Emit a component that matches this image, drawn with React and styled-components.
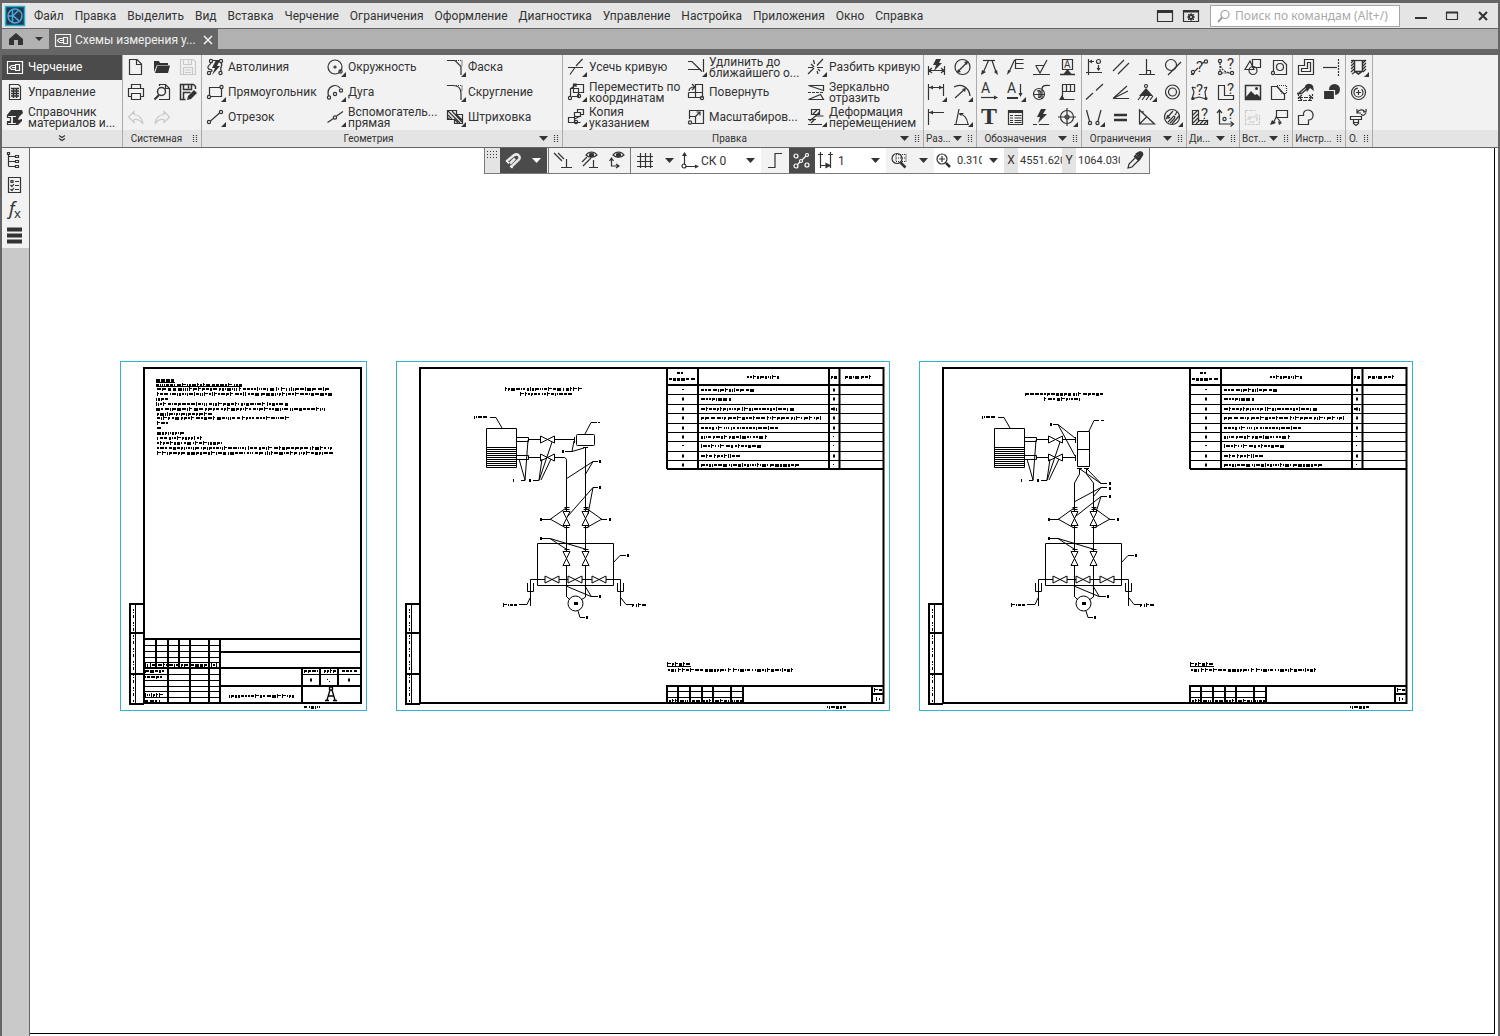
import styled, { createGlobalStyle, css } from 'styled-components';

const INK = '#333333';

const Svg = ({ children, w = 20, h = 21, sw = 1.2, ...rest }) => (
  <svg width={w} height={h} viewBox={`0 0 ${w} ${h}`} fill="none" stroke="currentColor" strokeWidth={sw} aria-hidden="true" {...rest}>
    {children}
  </svg>
);

// small helpers shared by the icons
const P = ({ d, ...rest }) => <path d={d} {...rest} />;
const F = ({ d }) => <path d={d} fill="currentColor" stroke="none" />;
const Dot = ({ x, y, r = 1.6 }) => <circle cx={x} cy={y} r={r} />;
const Glyph = ({ x, y, size, children }) => (
  <text x={x} y={y} fontSize={size} fill="currentColor" stroke="none">{children}</text>
);
const More = () => <F d="M20 15v5h-5z" />;

const icons = {
  drafting: <><P d="M2.500 4.500h15v12h-15z" /><P d="M10.500 7.500h4v6h-4zM10.500 8.500h-4l-2 2l2 2h4M7 10.500h3" /></>,
  control: <><P d="M4.500 2.500h9l2 2v13h-11z" /><P d="M6 6.500h8M6 9h8M6 11.500h8M6 14h8M8.500 6v10M11.500 6v10" strokeWidth="1.500" /></>,
  materials: <><F d="M2 8l4-5h11l1 3-4 4-1 3 4-1v2l-4 4H2v-4h3v-4H2z" /><path d="M2.500 8.500h9v2h-3v5h3v2h-9v-2h3v-5h-3z" fill="#f2f2f2" /></>,
  newDoc: <P d="M3.500 2.500h7.500l4.500 4.500v10.500h-12zM10.500 2.500v5h5" />,
  open: <><F d="M2 15V4h5l1 2h8v2H5z" /><F d="M5.500 8.500H18L16 16H3z" /></>,
  save: <P d="M2.500 2.500h13l2 2v13h-15zM5.500 2.500v5h8v-5M5.500 17.500v-7h9v7M7 13h6M7 15.500h6M10.500 3.500v3" />,
  print: <P d="M5.500 6.500v-4h9v4M5.500 14.500h-3v-8h15v8h-3M5.500 11.500h9v6h-9z" />,
  preview: <><P d="M7.500 4V2.500h6l4 4v11H7" /><P d="M13.500 2.500v4h4" /><circle cx="9.500" cy="9.500" r="4" strokeWidth="1.500" /><P d="M7 13l-4.500 4.500" strokeWidth="2" /></>,
  saveAs: <><P d="M17.500 7V4.500l-2-2h-13v15h5M5.500 2.500v5h8v-5M10.500 3.500v3M5.500 17.500v-7h7" strokeWidth="1.500" /><F d="M16 8l3 3-6 6-4 1 1-4z" /></>,
  undo: <P d="M8 4.500L2.500 10L8 15.500V12.500C12 12 15 13.500 17 17C16.500 11.500 13 8 8 7.500z" />,
  redo: <P d="M12 4.500L17.500 10L12 15.500V12.500C8 12 5 13.500 3 17C3.500 11.500 7 8 12 7.500z" />,

  autoline: <><Dot x="5" y="4" /><Dot x="3" y="16" /><Dot x="14.500" y="16" /><Dot x="15" y="4" /><P d="M5 5.500C5 8 1 8 2 11c1 3 4 0 4 3l-2 1M13.500 3.500H7M14.500 5.500c4 2-2 5 1 8.500" /><F d="M10 3L6 11h3L6 18l8-9h-3l3-6z" /></>,
  rect: <><P d="M3.500 13V5.500H14M15.500 6.500v8H5" /><Dot x="3" y="15" /><Dot x="15.500" y="5" /><More /></>,
  segment: <><Dot x="3" y="15" /><Dot x="15" y="5" /><P d="M4.500 14L13.500 6" /><More /></>,
  circle: <><circle cx="9" cy="10" r="7" /><circle cx="9" cy="10" r="1" /><Dot x="14.500" y="14.500" /><More /></>,
  arc: <><P d="M2.500 14C0 4 10 1 14 6" /><Dot x="15" y="8.500" /><Dot x="9" y="12" /><Dot x="3" y="15.500" /><More /></>,
  auxLine: <><P d="M1.500 15.500L7.500 11.500M10.500 9L17 4.500" /><Dot x="9" y="10.500" /><More /></>,
  chamfer: <><P d="M1 3.500h8l6 6V18" /><P d="M10 3.500h6v6" strokeDasharray="1 1" /><More /></>,
  fillet: <><P d="M1 3.500h6c5 0 8 3 8 8V18" /><P d="M10 3.500h6v6" strokeDasharray="1 1" /><More /></>,
  hatch: <><P d="M1.500 3.500h9v4h6v9h-8v-4h-7z" /><P d="M2 8l4 4M2 4l12 12M6 4l10 11M10 7l6 6M2 11l2 1.500M8 12l4 4" /><More /></>,

  trim: <><P d="M1 10.500h15M3 17.500L8 10.500" /><P d="M9 9L15.500 2" /><More /></>,
  moveXY: <><P d="M6.500 2.500h10v8h-10zM3.500 14V6.500h8v8H5" /><P d="M4 6.500l5-4M6 2h3v3" /><Dot x="3" y="16" /><Dot x="12" y="14" /><More /></>,
  copyTo: <><P d="M7.500 5.500h6v4h-6zM10.500 5v-2.500h6v5h-3M1.500 10.500h6v5h-6zM7.500 12l6-3M7.500 15.500h6" /><Dot x="9" y="15" /><More /></>,
  extend: <><P d="M1 4.500h4l10 10M1 12.500h13M16.500 2v13" /><More /></>,
  rotate: <><P d="M8.500 10V2.500h7v13M1.500 10.500h14M1.500 10.500v5h13M8.500 10v5" /><P d="M2 9c0-3 2-4 6-4M5 2l3 3-3 3" /><Dot x="15" y="16" /></>,
  scale: <><P d="M2.500 12V3.500h14v13H5M2.500 9.500h6v7" /><P d="M8 10l5-5M9.500 5H13v3.500" /><Dot x="3" y="15.500" /></>,
  split: <><P d="M1 17L7 11M10 8.500L16 2M1 10.500h5M10 10.500h6M6.500 3l1 4M11 17l-1-3" /><P d="M4 7l3 3M11 12l2 2" /><More /></>,
  mirror: <><P d="M1.500 3.500h15v5z" /><P d="M1 10.500h16" strokeDasharray="3 1" /><P d="M1.500 17.500h15l-3-5z" /></>,
  deform: <><P d="M4.500 2.500h8v5h-8zM2.500 14l6-5h8M1 12.500h8M1 17.500h14M4 16l4-4M10 3l-4 4M12.500 5l-5 5" /><More /></>,

  dimAuto: <><P d="M1.500 9v9M17.500 9v9M2 13.500h15M5 11l-3 2.500L5 16M14 11l3 2.500-3 2.500" /><F d="M9 2h5l-2 4h3l-8 8 2-6H6z" /></>,
  diameter: <><circle cx="9.500" cy="10" r="7.500" /><P d="M4.500 15l10-10" /><F d="M4 16l1-4 3 3zM15 4l-1 4-3-3z" /></>,
  dimLinear: <><P d="M1.500 2v16M16.500 2v12M2 5.500h14" /><F d="M2 5.500l4-2v4zM16 5.500l-4-2v4z" /><More /></>,
  dimRadius: <><P d="M1 5c7-4 15 0 16 9" /><P d="M2 16l10-9" /><F d="M13 6l-1 4-3-3z" /><More /></>,
  dimEdge: <><P d="M1.500 2v16M2 5.500h15" /><F d="M2 5.500l4-2v4z" /></>,
  dimAngle: <><P d="M1 17.500h15M3 17L6 2M6 7c5 0 8 4 9 10" /><F d="M6 6l5 0-3 3z" /><More /></>,

  leader: <><P d="M3 16L8.500 3.500h4M12 3.500L16 15" /><P d="M3 3.500h12" /><F d="M1 18l1-5 4 2zM18 18l-4-3 3-2z" /></>,
  leaderE: <><P d="M3 15L8.500 3M17.500 2.500h-8v9h8M9.500 6.500h8" /><F d="M1 18l1-5 3 1z" /></>,
  rough: <P d="M3.500 8.500h9M4 9l4 7L15 3M1 17.500h17" />,
  datum: <><P d="M4.500 2.500h10v10h-10z" /><Glyph x="6" y="11" size="10">A</Glyph><F d="M9.500 12l4 5h-8z" /><P d="M2 17.500h15" strokeWidth="1.500" /></>,
  textA: <><Glyph x="1" y="11" size="14">A</Glyph><P d="M1 15.500h14" /><F d="M18 15.500l-4-2v4z" /></>,
  textADown: <><Glyph x="1" y="11" size="14">A</Glyph><P d="M1 16h11" strokeWidth="2" /><P d="M14.500 2v9" /><F d="M14.500 15l-2-4h4z" /><More /></>,
  weld: <><circle cx="7" cy="12" r="5.500" /><P d="M2 12.500h10M7 8v8M10 17V7c0-4 4-4 8-3.500" /><P d="M5 9c3-1 4 0 4 3s-1 4-3 3" /></>,
  mark: <><P d="M4.500 2.500h12v7h-12zM4.500 2v14M8.500 3v6M12.500 3v6M4.500 17.500h12" /><F d="M1 18l3-5 3 5z" /></>,
  text: <text x="1" y="17" fontSize="24" fontWeight="700" fontFamily="Liberation Serif, serif" fill="currentColor" stroke="none">T</text>,
  table: <><P d="M2.500 3.500h14v14h-14z" /><P d="M3 5h13" strokeWidth="2" /><P d="M4 8.500h3M8.500 8.500h7M4 11h3M8.500 11h7M4 13.500h3M8.500 13.500h7M4 15.500h3M8.500 15.500h7" /></>,
  flash: <><F d="M9 2h5l-3 5h4l-9 9 2-6H5z" /><P d="M1 17.500h4M7 17.500h10" /></>,
  centre: <><circle cx="9" cy="10" r="6.500" /><P d="M9 1v18M0 10h18" /><circle cx="9" cy="10" r="2" /><More /></>,

  alignPts: <><P d="M3.500 2v16M1 15.500h16M4 4.500h5M13.500 8v5" /><circle cx="13.500" cy="4.500" r="2" /><F d="M4 4.500l3-2v4zM13.500 14l-2-3h4z" /></>,
  parallel: <P d="M2 14L13 3M7 17L18 6" />,
  perp: <P d="M9.500 2v15M2 17.500h16M9.500 13.500h4v4" />,
  tangent: <><circle cx="8" cy="8" r="5.500" /><P d="M5 18L18 5" /></>,
  collinear: <P d="M1 17.500l7-6.500M11 8.500l7-6.500" />,
  rays: <P d="M2 16.500L16 4M2 16.500L17 9M2 16.500h16" />,
  anchor: <><circle cx="9" cy="4" r="1.500" /><F d="M9 6l7 8H2z" /><P d="M1 18l3-4M5 18l3-4M9 18l3-4M13 18l3-4" /><More /></>,
  concentric: <><circle cx="9.500" cy="10" r="7" /><circle cx="9.500" cy="10" r="4" /></>,
  fixPts: <><P d="M1.500 3l3 11M16 3l-3 11" /><Dot x="5" y="16" /><Dot x="12.500" y="16" /><More /></>,
  equal: <P d="M3 8h13M3 13h13" strokeWidth="2.500" />,
  triangle: <P d="M2.500 3v14h15zM2.500 17l7-7M6 7v-3" />,
  hatchCircle: <><circle cx="9" cy="10" r="7.500" /><P d="M3 12l7-8M5 15l4-4c2-3 4-2 2 1l-4 4M9 17l7-8M7 10c-2 2-4 1-2-2M12 8l2-3" /><More /></>,

  askLine: <><Dot x="3" y="15" /><Dot x="16" y="4.500" /><P d="M5 14l3-3M12 7l2-2M1 17.500h3" /><Glyph x="6" y="15" size="15">?</Glyph></>,
  askArc: <><Dot x="4" y="4" /><Dot x="4" y="16" /><Dot x="16" y="16" /><P d="M4 6c0 5 4 9 10 10M4 6v8M5.500 16h9" strokeDasharray="2 1" /><Glyph x="11" y="12" size="15">?</Glyph></>,
  askPoly: <><P d="M2 5l2 5-2 7 7-2 7 2-1-7 2-5M2 5l4 1M17 5l-3 1" /><Glyph x="6" y="13" size="15">?</Glyph><Dot x="3" y="16.500" r="1" /><Dot x="16" y="16.500" r="1" /></>,
  askShape: <><P d="M8.500 13V3.500h-6v14h15v-4h-9z" /><Glyph x="11" y="12" size="15">?</Glyph></>,
  askHatch: <><P d="M8.500 13V3.500h-6v14h15v-4h-9z" /><P d="M3 8l5-5M3 12l5-5M3 16l5-5M6 17l4-4M10 17l4-4M14 17l4-4" /><Glyph x="11" y="12" size="15">?</Glyph></>,
  askAxis: <><P d="M3.500 3v14h14M1 6l2.500-3L6 6M14.500 14.500l3 2.500-3 2.500" /><Dot x="8.500" y="12" /><Glyph x="11" y="12" size="15">?</Glyph></>,

  shapes: <><P d="M9.500 2.500h8v8h-8z" /><P d="M7 4L2 12.500h9z" /><circle cx="10" cy="13.500" r="4" /></>,
  fragment: <><P d="M4.500 14V3.500h9l4 4v10H6" /><circle cx="11" cy="10" r="3.500" /><Dot x="4" y="16" /></>,
  image: <><P d="M2.500 3.500h15v14h-15z" strokeWidth="1.500" /><F d="M3 17v-2l5-6 4 4 2-1 3 3v2z" /><circle cx="13.500" cy="6.500" r="1.500" fill="currentColor" stroke="none" /></>,
  cropView: <><P d="M8 4.500H2.500v13h13V11" /><P d="M8 3.500h9.500v8H13z" strokeDasharray="1 1" /><P d="M8 4.500l7.500 8" /></>,
  refresh: <><P d="M2.500 3.500h10M2.500 3.500v14h14V8" strokeDasharray="3 1" /><P d="M6 12v-2h8v4M4 12h4M12 8h3M12 15H6" /></>,
  callout: <><P d="M7.500 3.500h11v7h-11zM7.500 9L4 17M8 10.500l4 5" /><F d="M1 18l2-5 4 3zM10 18l-1-4 4 2z" /></>,
  outline: <P d="M8.500 2.500h9v15h-15v-9h6zM11.500 5.500h3v9h-9v-3h6z" />,
  extendTo: <><P d="M1 10.500h14" /><P d="M16.500 2v17" strokeDasharray="2 1" /></>,
  clean: <><P d="M3 11L11 4M5 12l7-6M1 11.500h4" strokeWidth="1.500" /><F d="M9 4c2-3 6-3 8 0l1 5-4-3-3 4z" /><P d="M2.500 12v6M16.500 12v6" strokeDasharray="2 1" /><P d="M3 15.500h13M6 13l-3 2.500L6 18M13 13l3 2.500-3 2.500M2 18.500h15" strokeDasharray="4 1" /></>,
  overlap: <><circle cx="12.500" cy="7.500" r="5.500" fill="currentColor" stroke="none" /><path d="M1.500 8.500h11v9h-11z" fill="currentColor" stroke="#f2f2f2" /></>,
  union: <P d="M2.500 8.500h5C7 5 9 3 12 3c3.500 0 5.500 3 5 6c-.5 3-2.500 4-4.500 4v4.500h-10z" />,
  drill: <><P d="M5.500 3v11l4 3 4-3V3M5.500 14.500h8" strokeWidth="1.500" /><P d="M2 3.500h15" /><P d="M2 6l3-3M2 9l3-3M2 12l3-3M2 15l3-3M3 17l3-2M14 6l3-3M14 9l3-3M14 12l3-3M14 15l3-3" /><More /></>,
  thread: <><circle cx="9.500" cy="10.500" r="7" /><circle cx="9.500" cy="10.500" r="4.500" strokeDasharray="20 4" /><P d="M9.500 8v5M7 10.500h5" /></>,
  bolt: <><P d="M1.500 9.500h11v3h-11zM4.500 12.500v4l2.500 2 2.500-2v-4M4.500 15.500h5" /><P d="M8 6c2-4 6-4 8-1M17 6c-2 3-4 3-5 1M8 2v4h4M17 2v3h-3" /></>,

  tree: <><P d="M3.500 4v12.500M3.500 6.500h7M3.500 11.500h7M3.500 16.500h7" /><P d="M2.500 2.500h2v2h-2zM10.500 5.500h3v2h-3zM10.500 10.500h3v2h-3zM10.500 15.500h3v2h-3z" /></>,
  params: <><P d="M3.500 2.500h12v15h-12z" /><P d="M6 5.500h2v2h-2zM10 6.500h4M10 10.500h4M10 14.500h4M5.500 10l1.500 1.500 2-2.500M5.500 14l1.500 1.500 2-2.500" /></>,
  fx: <g fontFamily="Noto Sans, sans-serif"><text x="4" y="15" fontSize="18" fontStyle="italic" fill="currentColor" stroke="none">f</text><text x="9" y="18" fontSize="13" fill="currentColor" stroke="none">x</text></g>,
  layers: <P d="M2 4.500h15M2 10.500h15M2 16.500h15" strokeWidth="4" />,
};

const Icon = ({ name, dim }) => (
  <Svg color={dim ? '#c9c9c9' : undefined}>{icons[name]}</Svg>
);

const menu = ['Файл', 'Правка', 'Выделить', 'Вид', 'Вставка', 'Черчение', 'Ограничения', 'Оформление', 'Диагностика', 'Управление', 'Настройка', 'Приложения', 'Окно', 'Справка'];

const panels = [
  { title: 'Геометрия', wide: true, items: [
    ['autoline', 'Автолиния'], ['circle', 'Окружность'], ['chamfer', 'Фаска'],
    ['rect', 'Прямоугольник'], ['arc', 'Дуга'], ['fillet', 'Скругление'],
    ['segment', 'Отрезок'], ['auxLine', 'Вспомогатель...\nпрямая'], ['hatch', 'Штриховка'],
  ] },
  { title: 'Правка', wide: true, items: [
    ['trim', 'Усечь кривую'], ['extend', 'Удлинить до\nближайшего о...'], ['split', 'Разбить кривую'],
    ['moveXY', 'Переместить по\nкоординатам'], ['rotate', 'Повернуть'], ['mirror', 'Зеркально\nотразить'],
    ['copyTo', 'Копия\nуказанием'], ['scale', 'Масштабиров...'], ['deform', 'Деформация\nперемещением'],
  ] },
  { title: 'Раз...', cols: 2, items: ['dimAuto', 'diameter', 'dimLinear', 'dimRadius', 'dimEdge', 'dimAngle'] },
  { title: 'Обозначения', cols: 4, items: ['leader', 'leaderE', 'rough', 'datum', 'textA', 'textADown', 'weld', 'mark', 'text', 'table', 'flash', 'centre'] },
  { title: 'Ограничения', cols: 4, items: ['alignPts', 'parallel', 'perp', 'tangent', 'collinear', 'rays', 'anchor', 'concentric', 'fixPts', 'equal', 'triangle', 'hatchCircle'] },
  { title: 'Ди...', cols: 2, items: ['askLine', 'askArc', 'askPoly', 'askShape', 'askHatch', 'askAxis'] },
  { title: 'Вст...', cols: 2, items: ['shapes', 'fragment', 'image', 'cropView', 'refresh', 'callout'], dim: ['refresh'] },
  { title: 'Инстр...', cols: 2, noMenu: true, items: ['outline', 'extendTo', 'clean', 'overlap', 'union'] },
  { title: 'О.', cols: 1, noMenu: true, items: ['drill', 'thread', 'bolt'] },
];

const system = ['newDoc', 'open', 'save', 'print', 'preview', 'saveAs', 'undo', 'redo'];

const Arrow = () => <Svg w={12} h={6}><F d="M2 0h9L6.500 5z" /></Svg>;
const Grip = () => (
  <Svg w={6} h={10} strokeDasharray="1 1"><path d="M1.500 1v8M4.500 1v8" /></Svg>
);

const Footer = ({ title, noMenu }) => (
  <PanelFooter>
    <PanelTitle>{title}</PanelTitle>
    {!noMenu && <Arrow />}
    <Grip />
  </PanelFooter>
);

const Ribbon = () => (
  <RibbonBar>
    <Panel>
      <ModeList>
        <Mode $active><Icon name="drafting" />Черчение</Mode>
        <Mode><Icon name="control" />Управление</Mode>
        <Mode><Icon name="materials" />{'Справочник\nматериалов и...'}</Mode>
      </ModeList>
      <ModeFooter aria-label="Ещё"><Svg w={8} h={7}><path d="M1 0.500l3 2 3-2M1 3.500l3 2 3-2" /></Svg></ModeFooter>
    </Panel>
    <Panel>
      <IconGrid $cols={3}>
        {system.map((n) => (
          <IconButton key={n} aria-label={n}><Icon name={n} dim={['save', 'undo', 'redo'].includes(n)} /></IconButton>
        ))}
      </IconGrid>
      <Footer title="Системная" noMenu />
    </Panel>
    {panels.map((p) => (
      <Panel key={p.title}>
        {p.wide ? (
          <ToolGrid>
            {p.items.map(([icon, label]) => <Tool key={icon}><Icon name={icon} />{label}</Tool>)}
          </ToolGrid>
        ) : (
          <IconGrid $cols={p.cols}>
            {p.items.map((n) => <IconButton key={n} aria-label={n}><Icon name={n} dim={p.dim?.includes(n)} /></IconButton>)}
          </IconGrid>
        )}
        <Footer title={p.title} noMenu={p.noMenu} />
      </Panel>
    ))}
    <RibbonRest><PanelFooter /></RibbonRest>
  </RibbonBar>
);

const QuickBar = () => (
  <FloatBar>
    <DragHandle><Svg w={12} h={7} strokeDasharray="1 2" sw={1}><path d="M0 .5h12M0 3.500h12M0 6.500h12" /></Svg></DragHandle>
    <BarButton $dark $w={25} aria-label="Привязки">
      <Svg><path d="M4 11l6.500-5.500c4-3 8 1 5 4.500L8 17M7 13.500l5-5" strokeWidth="2.500" stroke="#e8e8e8" /><path d="M3 10.500l3 3M7 16l2.500 2" stroke="#ffffff" strokeWidth="1.500" /></Svg>
    </BarButton>
    <BarButton $dark $w={22} aria-label="Список привязок"><Arrow /></BarButton>
    <BarGroup>
      <BarButton $w={28} aria-label="Ограничения"><Svg><path d="M1 3l8 8M5 3l6 6M13.500 9v9M8 17.500h11" /></Svg></BarButton>
      <BarButton $w={27} aria-label="Показать ограничения"><Svg><path d="M5 5c3-4 8-4 11 0c-3 3-8 3-11 0zM2 16l8-8M1 12l5-5M12.500 10v8M8 17.500h9" /><circle cx="10.500" cy="5" r="2" fill="currentColor" /></Svg></BarButton>
      <BarButton $w={26} aria-label="Степени свободы"><Svg><path d="M6 5c3-4 8-4 11 0c-3 3-8 3-11 0zM4.500 9v7H11M2.500 11l2-3 2 3M9 14l3 2-3 2" /><circle cx="11.500" cy="5" r="2" fill="currentColor" /></Svg></BarButton>
    </BarGroup>
    <BarButton $w={27} aria-label="Сетка"><Svg><path d="M5.500 3v15M10.500 3v15M15.500 3v15M2 6.500h16M2 11.500h16M2 16.500h16" /></Svg></BarButton>
    <BarButton $w={22} aria-label="Настройка сетки"><Arrow /></BarButton>
    <Combo $w={81}>
      <Svg><path d="M4.500 3v12M6 16.500h11" /><path d="M2 6l2.500-4L7 6zM19 16.500l-4-2v4z" fill="currentColor" stroke="none" /><circle cx="4" cy="16" r="2" /></Svg>
      <BarSelect aria-label="Система координат" defaultValue="0"><option value="0">СК 0</option></BarSelect>
      <Arrow />
    </Combo>
    <BarButton $w={28} aria-label="Ортогональность"><Svg><path d="M3 17.500h7v-14h7" /></Svg></BarButton>
    <BarButton $dark $w={26} aria-label="Округление"><Svg><circle cx="4" cy="6" r="2" /><circle cx="9" cy="11" r="1.500" /><circle cx="15" cy="5" r="1.500" /><circle cx="4" cy="16" r="2" /><circle cx="15" cy="15" r="2" /><path d="M10 10l4-4M5 15l3-3" /></Svg></BarButton>
    <Combo $w={71}>
      <Svg><path d="M5.500 7v11M15.500 7v11M6 15.500h9M3 4.500h5M5.500 2v5M13 4.500h5M15.500 2v5" /><path d="M15 15.500l-4-2v4z" fill="currentColor" /></Svg>
      <BarSelect $pad={3} aria-label="Шаг курсора" defaultValue="1"><option>1</option></BarSelect>
      <Arrow />
    </Combo>
    <BarButton $w={26} aria-label="Масштаб рамкой"><Svg><circle cx="8" cy="8.500" r="5" /><path d="M11.500 12.500l5 5" strokeWidth="2.500" /><path d="M7 4.500h10v7H7zM7 8h10" strokeDasharray="1 1" /></Svg></BarButton>
    <BarButton $w={22} aria-label="Варианты масштаба"><Arrow /></BarButton>
    <Combo $w={70}>
      <Svg><circle cx="8" cy="9" r="5" /><path d="M5 9h6M8 6v6" /><path d="M12 13l4 4" strokeWidth="2.500" /></Svg>
      <BarInput aria-label="Масштаб" defaultValue="0.310" />
      <Arrow />
    </Combo>
    <AxisLabel htmlFor="cx">X</AxisLabel>
    <CoordInput id="cx" defaultValue="4551.620" />
    <AxisLabel htmlFor="cy">Y</AxisLabel>
    <CoordInput id="cy" defaultValue="1064.030" />
    <BarButton $w={29} aria-label="Копировать свойства"><Svg><path d="M11 4l3-2c3-1 5 2 3 4l-2 3z" fill="currentColor" /><path d="M9.500 5.500l5 5" strokeWidth="2.500" /><path d="M11 7l-7 7-1 4 4-1 7-7" /></Svg></BarButton>
  </FloatBar>
);

/* ---- drawing sheets ---- */

// strokes of a text line that is too small to be legible at this zoom
const strokesOf = (x, y, w, seed) => {
  let s = seed * 7919 + w * 131 + 17;
  const next = (n) => {
    s = (s * 1103515245 + 12345) % 2147483648;
    return Math.floor(s / 65536) % n;
  };
  const bar = (px, py, len) => `M${px} ${py + 0.5}h${len}`;
  let d = '';
  let pos = x;
  while (pos < x + w) {
    const len = 1 + next(4);
    const kind = next(5);
    if (kind === 0) d += bar(pos, y - 2, 1) + bar(pos, y - 1, len) + bar(pos, y, 1) + bar(pos, y + 1, 1);
    else if (kind === 1) d += bar(pos, y - 1, len) + bar(pos, y, len) + bar(pos, y + 1, 1);
    else d += bar(pos, y - 1, len) + bar(pos, y, len);
    if (kind === 4) d += bar(pos, y + 1, len);
    pos += len + (next(7) === 0 ? 2 : 1);
  }
  return d;
};

const Note = ({ x, y, w, n = 0 }) => <path d={strokesOf(x, y, w, n + y)} strokeWidth="1" />;
const Mark = ({ x, y }) => <path d={`M${x} ${y}h2`} strokeWidth="3" />;

const Lines = ({ d, heavy }) => <path d={d} strokeWidth={heavy ? 2 : 1} />;

const SheetEdge = ({ w }) => <rect x=".5" y=".5" width={w - 1} height="349" stroke="#35b1d3" />;

const SideStamp = () => (
  <>
    <Lines heavy d="M24 243H10V343H24M10 272H24M10 313H24" />
    <Lines d="M15.500 243V343" />
    <path d="M13.500 248V342" strokeDasharray="2 1 1 2 3 4" />
  </>
);

const NOTES = [
  [36, 19, 19], [36, 24, 86], [37, 28, 173], [37, 33, 172], [36, 38, 12], [36, 43, 132], [36, 48, 171], [37, 53, 54],
  [37, 57, 131], [37, 62, 11], [37, 67, 6], [37, 72, 25], [37, 77, 44], [37, 82, 65], [37, 87, 176], [37, 92, 175],
];

const TitleSheet = () => (
  <Sheet width="247" height="350" viewBox="0 0 247 350">
    <SheetEdge w={247} />
    <path d="M24 7H241V342H24z" strokeWidth="2" />
    <SideStamp />
    {NOTES.map(([x, y, w], i) => <Note key={y} x={x} y={y} w={w} n={i} />)}
    <Lines d="M36 21.500h19M36 25.500h86" />
    <Lines heavy d="M24 278H241M100 278V343M36 278V307M48 278V343M59 278V307M70 278V343M89 278V343M24 307H241M100 291H241M100 325H241M182 307V343M200 307V325M218 307V325" />
    <Lines d="M24 284.500H100M24 290.500H100M24 296.500H100M24 301.500H100M24 313.500H100M24 319.500H100M24 325.500H100M24 330.500H100M24 336.500H100M182 313.500H241" />
    <Note x={25} y={304} w={73} n={1} />
    <Note x={25} y={310} w={20} /><Note x={25} y={316} w={17} n={1} />
    <Note x={25} y={334} w={19} n={2} /><Note x={25} y={340} w={16} n={3} />
    <Note x={184} y={310} w={14} /><Note x={204} y={310} w={10} n={1} /><Note x={222} y={310} w={14} n={2} />
    <Mark x={190} y={319} /><Lines d="M207 318.500h1M209 320.500h1" /><Mark x={228} y={319} />
    <Note x={109} y={335} w={64} n={3} />
    <path d="M207 339l3-10h2l3 10M208 335h6M209.500 329v-3h3v3M205 339.500h4M213 339.500h4" strokeWidth="1.300" />
    <Note x={184} y={346} w={16} n={1} />
  </Sheet>
);

const ROWS = [24, 33, 43, 52, 62, 71, 80, 90, 99];
const ROW_TEXT = [54, 30, 92, 120, 75, 65, 61, 36, 98];

const SpecTable = () => (
  <>
    <Lines heavy d="M271 7V108M302 7V108M433 7V108M443.500 7V108M271 108H487M271 24H487" />
    {ROWS.slice(1).map((y) => <Lines key={y} d={`M271 ${y}.5H487`} />)}
    <Note x={281} y={12} w={7} /><Note x={273} y={18} w={26} n={1} />
    <Note x={351} y={16} w={33} n={2} /><Note x={435} y={16} w={5} n={3} /><Note x={449} y={16} w={28} n={2} />
    {ROWS.map((y, i) => (
      <g key={y}>
        {i === 0 || i === 6 ? <Lines d={`M286 ${y + 4}.5h2`} /> : <Mark x={286} y={y + 5} />}
        <Note x={305} y={y + 5} w={ROW_TEXT[i]} n={i} />
        {i > 4 && i !== 7 ? <Lines d={`M437 ${y + 4}.5h1`} /> : <Mark x={437} y={y + 5} />}
      </g>
    ))}
    <Note x={435} y={48} w={6} />
    <Note x={271} y={303} w={24} /><Lines d="M271 305.500h24" />
    <Note x={272} y={309} w={126} n={1} />
    <Lines heavy d="M271 342V325H487M282 325V342M294 325V342M306 325V342M317 325V342M335 325V342M347 325V342M476 325V342M476 333H487" />
    <Lines d="M271 330.500H347M271 336.500H347" />
    <Note x={273} y={340} w={72} n={2} />
    <Note x={478} y={329} w={7} /><Note x={480} y={338} w={4} n={1} />
    <Note x={431} y={346} w={17} n={3} />
  </>
);

const HValve = ({ x, y }) => <path d={`M${x} ${y - 3.5}v7l14-7v7z`} />;
const VValve = ({ x, y }) => <path d={`M${x - 3.5} ${y}h7l-7 14h7z`} />;

// tank, valve block and gauge common to both schemes
const Scheme = () => (
  <g>
    <path d="M90.500 67.500H120.500V106.500H90.500z" />
    <path d="M91 86.500H120M91 88.500H120M91 90.500H120M91 92.500H120M91 94.500H120M91 96.500H120M91 98.500H120M91 100.500H120M91 102.500H120M91 104.500H120" />
    <path d="M94 56.500H100L106 67" />
    <Note x={78} y={56} w={14} />
    <path d="M120 76.500H132.500V80.500H120M120 94.500H132.500V98.500H120M132 78.500H145M132 96.500H145" />
    <HValve x={144.500} y={78.500} /><HValve x={144.500} y={96.500} />
    <path d="M125 119.500H129L132 79M129 119L123 98M137 119.500H143L156 81M143 119L146 98M145 119L155 98" />
    <Lines d="M117.500 118v3" /><Mark x={133} y={119.500} />
    {[170.5, 189.5].map((x) => (
      <g key={x}>
        <VValve x={x} y={150.5} /><VValve x={x} y={190.5} />
        <path d={`M${x - 2} 146.500h5M${x - 2} 148.500h5M${x - 2} 166.500h5M${x - 2} 188.500h5M${x} 140V150M${x} 164V191M${x} 204V236`} />
      </g>
    ))}
    <path d="M146 158.500H154L170 147M154 158L170 167M211 158.500H206L190 147M206 158L190 167M146 177.500H154L170 188M154 177.500L189 188" />
    <Mark x={144} y={158.500} /><Mark x={213} y={158.500} /><Mark x={144} y={177.500} />
    <path d="M141.500 182.500H217.500V224.500H141.500z" />
    <path d="M134.500 226V218.500H149M163 218.500H172M186 218.500H196M210 218.500H224.500V226" />
    <HValve x={149} y={218.500} /><HValve x={172} y={218.500} /><HValve x={196} y={218.500} />
    <path d="M131.500 222V230.500H137.500V222M221.500 222V230.500H227.500V222M134.500 225V245M224.500 225V245M123 243.500H131L134 237M236 243.500H230L225 237" />
    <Note x={107} y={244} w={14} n={2} /><Note x={236} y={244} w={15} n={1} />
    <path d="M217 202L224 194.500H230M202 235.500H195L170 225M195 235L189 225M170 235L174 239M189.500 236L185 239" />
    <circle cx="179.500" cy="242.500" r="7.500" />
    <Note x={178} y={242} w={3} />
    <path d="M182 250L184 256.500H189" />
    <Mark x={231} y={194.500} /><Mark x={203} y={235.500} /><Mark x={190} y={256.500} />
  </g>
);

const SchemeOne = () => (
  <Sheet width="494" height="350" viewBox="0 0 494 350">
    <SheetEdge w={494} />
    <path d="M24 7H487.500V342H24z" strokeWidth="2" />
    <SideStamp />
    <Note x={109} y={28} w={78} n={1} /><Note x={124} y={33} w={51} n={2} />
    <Scheme />
    <path d="M158 78.500H178M178.500 76V82M158 96.500H167Q170.500 96 170.500 100V146M189.500 86V146M187 86.500h5" />
    <rect x="180.500" y="73.500" width="18" height="11" rx="1" />
    <path d="M189 73L195 61.500H201M169 90.500H176L178 80M176 90.500L188 87M202 100.500H197L170 118M197 100.500L189 114M202 126.500H197L172 155M197 126.500L192 153" />
    <Lines d="M202 61.500h2" /><Mark x={166} y={90.500} /><Mark x={203} y={100.500} /><Mark x={203} y={126.500} />
    <SpecTable />
  </Sheet>
);

const SchemeTwo = () => (
  <Sheet width="494" height="350" viewBox="0 0 494 350">
    <SheetEdge w={494} />
    <path d="M24 7H487.500V342H24z" strokeWidth="2" />
    <SideStamp />
    <Note x={106} y={33} w={77} n={3} /><Note x={125} y={38} w={37} n={2} />
    <g transform="translate(-15 0)"><Scheme /></g>
    <path d="M143 78.500H156.500M156.500 76V82M143 96.500H156.500M156.500 94V100" />
    <path d="M158.500 70.500H170.500V105.500H158.500zM158.500 88.500H170.500M158 107.500h5M165 107.500h5M160.500 108V113L155.500 122V141M167.500 108V113L174.500 122V141" />
    <path d="M134 63.500H139L156 77M139 63.500L156 95M170 70L175 59.500H180M188 122.500H182L161 108M182 122.500L168 108M188 126.500H182L155 141M182 126.500L174 136M188 135.500H182L157 155M182 135.500L177 151" />
    <Mark x={131} y={63.500} /><Lines d="M182 59.500h3" /><Mark x={190} y={122.500} /><Mark x={190} y={127.500} /><Mark x={190} y={135.500} />
    <SpecTable />
  </Sheet>
);

const App = () => (
  <Window>
    <GlobalStyle />
    <MenuBar>
      <Svg w={20} h={20} sw={1.5}>
        <path d="M.5 .5h19v19H.5z" fill="#253746" stroke="#1fb0d8" strokeWidth="1.500" />
        <g stroke="#4ba8e0"><circle cx="10" cy="10" r="7" /><path d="M7.500 4v12M7.500 10l6-5.500M8.500 10l5.500 5M3 10h5" /></g>
      </Svg>
      <MenuList>{menu.map((m) => <MenuItem key={m}>{m}</MenuItem>)}</MenuList>
      <TitleTools>
        <TitleButton $w={26} aria-label="Экран"><Svg w={16} h={12}><path d="M.5 .5h15v11H.5z" /><path d="M0 2h16" strokeWidth="2" /></Svg></TitleButton>
        <TitleButton $w={26} aria-label="Настройка интерфейса"><Svg w={16} h={12}><path d="M.5 .5h15v11H.5z" /><path d="M0 1.500h16" strokeWidth="2" /><circle cx="8" cy="7" r="2" strokeWidth="2" /><path d="M8 3v8M4 7h8M5 4l6 6M11 4l-6 6" strokeWidth="1" /><circle cx="8" cy="7" r="1" fill="#e5e5e5" stroke="none" /></Svg></TitleButton>
        <SearchBox>
          <Svg w={14} h={14}><circle cx="8" cy="5.500" r="4" /><path d="M5 8.500L1 13" strokeWidth="2" /></Svg>
          <SearchInput aria-label="Поиск по командам" placeholder="Поиск по командам (Alt+/)" />
        </SearchBox>
        <TitleButton $w={31} aria-label="Свернуть"><Svg w={12} h={12}><path d="M0 8h12" strokeWidth="2" /></Svg></TitleButton>
        <TitleButton $w={31} aria-label="Развернуть"><Svg w={12} h={10}><path d="M.5 1.500h11v7H.5z" /><path d="M0 1.500h12" strokeWidth="2" /></Svg></TitleButton>
        <TitleButton $w={31} aria-label="Закрыть"><Svg w={10} h={10}><path d="M1 1l8 8M9 1L1 9" strokeWidth="2" /></Svg></TitleButton>
      </TitleTools>
    </MenuBar>
    <TabBar>
      <HomeTab aria-label="Стартовая страница">
        <Svg w={14} h={12}><path d="M0 6l7-6 7 6v6H9V7H5v5H0z" fill="currentColor" stroke="none" /></Svg>
        <Svg w={8} h={4}><path d="M0 0h8L4 4z" fill="currentColor" stroke="none" /></Svg>
      </HomeTab>
      <DocTab>
        <Icon name="drafting" />
        <DocName>Схемы измерения у...</DocName>
        <CloseTab aria-label="Закрыть вкладку"><Svg w={8} h={8} sw={1.6}><path d="M0 0l8 8M8 0L0 8" /></Svg></CloseTab>
      </DocTab>
      <TabRest />
    </TabBar>
    <Ribbon />
    <Workspace>
      <SideBar>
        {['tree', 'params', 'fx', 'layers'].map((n) => <SideButton key={n} aria-label={n}><Icon name={n} /></SideButton>)}
      </SideBar>
      <Canvas>
        <Field>
          <QuickBar />
          <Sheets><TitleSheet /><SchemeOne /><SchemeTwo /></Sheets>
        </Field>
      </Canvas>
    </Workspace>
  </Window>
);

const GlobalStyle = createGlobalStyle`
  * { box-sizing: border-box; }

  body {
    margin: 0;
    color: ${INK};
    font-family: Roboto, "Noto Sans", sans-serif;
    font-size: 12px;
  }

  button, input, select {
    margin: 0;
    padding: 0;
    border: none;
    border-radius: 0;
    background: none;
    color: inherit;
    font: inherit;
    outline: none;
  }

  svg { display: block; flex: none; overflow: visible; }
`;

const Window = styled.div`
  display: flex;
  flex-direction: column;
  min-height: 100vh;
  padding: 3px 2px 0;
  background: #666666;
`;

const MenuBar = styled.header`
  display: flex;
  align-items: center;
  height: 25px;
  padding-left: 3px;
  background: #e5e5e5;
`;

const MenuList = styled.nav`
  display: flex;
  gap: 1px;
  margin-left: 4px;
`;

const MenuItem = styled.button`
  height: 25px;
  padding: 0 5px;
  white-space: nowrap;
`;

const TitleTools = styled.div`
  display: flex;
  align-items: center;
  margin-left: auto;
`;

const TitleButton = styled.button`
  display: flex;
  align-items: center;
  justify-content: center;
  width: ${(p) => p.$w}px;
  height: 25px;
`;

const SearchBox = styled.div`
  display: flex;
  align-items: center;
  gap: 4px;
  width: 190px;
  height: 22px;
  margin: 0 5px 0 6px;
  padding-left: 6px;
  border: 1px solid #a6a6a6;
  background: #ffffff;
  color: #a0a0a0;
`;

const SearchInput = styled.input`
  flex: 1;
  min-width: 0;
  font-family: "Noto Sans", sans-serif;

  &::placeholder {
    color: #a8a8a8;
    opacity: 1;
  }
`;

const TabBar = styled.div`
  display: flex;
  height: 27px;
  padding-top: 1px;
`;

const HomeTab = styled.button`
  display: flex;
  align-items: center;
  gap: 12px;
  width: 47px;
  height: 20px;
  padding-left: 7px;
  background: #b1b1b1;
`;

const DocTab = styled.div`
  display: flex;
  align-items: center;
  width: 169px;
  height: 22px;
  padding-left: 4px;
  color: #f0f0f0;
`;

const DocName = styled.span`
  flex: 1;
  padding-left: 2px;
  line-height: 20px;
  white-space: nowrap;
`;

const CloseTab = styled.button`
  padding: 0 8px;
`;

const TabRest = styled.div`
  flex: 1;
  height: 20px;
  background: #b1b1b1;
`;

const RibbonBar = styled.div`
  display: flex;
  height: 93px;
  border-bottom: 1px solid #666666;
  background: #f2f2f2;
`;

const Panel = styled.section`
  display: flex;
  flex: none;
  flex-direction: column;
  border-right: 1px solid #ababab;
`;

const RibbonRest = styled.div`
  display: flex;
  flex: 1;
  flex-direction: column;
  justify-content: flex-end;
`;

const PanelFooter = styled.footer`
  display: flex;
  align-items: center;
  gap: 4px;
  height: 17px;
  padding: 0 3px 0 2px;
  background: #e4e4e4;
`;

const PanelTitle = styled.h2`
  flex: 1;
  width: 0;
  margin: 0;
  font-size: 10px;
  font-weight: 400;
  line-height: 17px;
  text-align: center;
  white-space: nowrap;
`;

const ModeList = styled.div`
  width: 120px;
`;

const row = css`
  display: flex;
  align-items: center;
  height: 25px;
  line-height: 11px;
  text-align: left;
  white-space: pre;
`;

const Mode = styled.button`
  ${row}
  gap: 3px;
  width: 100%;
  padding-left: 3px;
  background: ${(p) => (p.$active ? '#4b4b4b' : 'transparent')};
  color: ${(p) => (p.$active ? '#ffffff' : INK)};
`;

const ModeFooter = styled.button`
  display: flex;
  align-items: center;
  justify-content: center;
  height: 17px;
  background: #e4e4e4;
`;

const ToolGrid = styled.div`
  display: grid;
  grid-template-columns: repeat(3, 120px);
`;

const Tool = styled.button`
  ${row}
  gap: 2px;
  padding-left: 4px;
`;

const IconGrid = styled.div`
  display: grid;
  grid-template-columns: repeat(${(p) => p.$cols}, 26px);
  grid-auto-rows: 25px;
  height: 75px;
`;

const IconButton = styled.button`
  display: flex;
  align-items: center;
  justify-content: center;
`;

const Workspace = styled.main`
  display: flex;
  flex: 1;
`;

const SideBar = styled.aside`
  width: 28px;
  flex: none;
  border-right: 1px solid #666666;
  background: #c9c9c9;
`;

const SideButton = styled.button`
  display: flex;
  align-items: center;
  justify-content: center;
  width: 100%;
  height: 25px;
  padding-right: 1px;
  background: #f2f2f2;
`;

const Canvas = styled.div`
  display: flex;
  flex: 1;
  min-width: 0;
  padding: 0 3px 2px 0;
  background: #ffffff;
`;

const Field = styled.div`
  flex: 1;
  min-width: 0;
  overflow: hidden;
  border: solid #000000;
  border-width: 0 1px 1px 0;
`;

const FloatBar = styled.div`
  display: flex;
  width: max-content;
  height: 26px;
  margin-left: 454px;
  border: 1px solid #7a7a7a;
  border-top: none;
  background: #f2f2f2;
`;

const DragHandle = styled.div`
  width: 15px;
  padding: 3px 0 0 2px;
  background: #e4e4e4;
`;

const BarButton = styled.button`
  display: flex;
  align-items: center;
  justify-content: center;
  width: ${(p) => p.$w}px;
  background: ${(p) => (p.$dark ? '#4b4b4b' : 'transparent')};
  color: ${(p) => (p.$dark ? '#ffffff' : INK)};
`;

const BarGroup = styled.div`
  display: flex;
  margin-left: 1px;
  border: solid #7a7a7a;
  border-width: 0 1px;
`;

const Combo = styled.div`
  display: flex;
  align-items: center;
  width: ${(p) => p.$w}px;
  padding-right: 5px;
  background: #ffffff;
`;

const BarSelect = styled.select`
  flex: 1;
  min-width: 0;
  padding-left: ${(p) => p.$pad || 1}px;
  appearance: none;
`;

const BarInput = styled.input`
  width: 25px;
  margin: 0 auto 0 3px;
  font-size: 11px;
`;

const AxisLabel = styled.label`
  width: 14px;
  background: #e4e4e4;
  line-height: 24px;
  text-align: center;
`;

const CoordInput = styled.input`
  width: 44px;
  padding-left: 2px;
  background: #ffffff;
  font-size: 11px;
`;

const Sheets = styled.div`
  display: flex;
  gap: 29px;
  margin: 187px 0 0 90px;
`;

const Sheet = styled.svg.attrs({ fill: 'none', stroke: '#000000' })``;

export default App;
